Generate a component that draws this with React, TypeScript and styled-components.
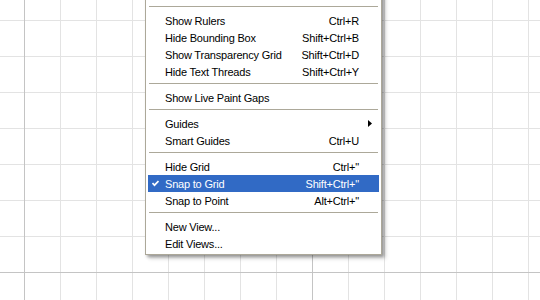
import React from "react"
import styled, { createGlobalStyle } from "styled-components"

const GlobalStyle = createGlobalStyle`
  html, body {
    margin: 0;
    padding: 0;
    background: #ffffff;
  }
  body {
    font-family: "Liberation Sans", Arial, sans-serif;
    font-size: 11px;
    letter-spacing: -0.2px;
  }
`;

const Canvas = styled.div`
  position: relative;
  width: 540px;
  height: 300px;
  overflow: hidden;
  background-color: #ffffff;
  background-image:
    linear-gradient(to right, #c4c4c4 1px, transparent 1px),
    linear-gradient(to bottom, #c4c4c4 1px, transparent 1px),
    linear-gradient(to right, #e3e3e3 1px, transparent 1px),
    linear-gradient(to bottom, #e3e3e3 1px, transparent 1px);
  background-size: 288px 288px, 288px 288px, 36px 36px, 36px 36px;
  background-position: 24px 0, 0 272px, 24px 0, 0 20px;
`;

const Menu = styled.div`
  position: absolute;
  left: 145px;
  top: -18px;
  width: 231px;
  padding: 20px 2px 2px;
  background: #ffffff;
  border: 1px solid #aca899;
  box-shadow: 2px 2px 3px rgba(0, 0, 0, 0.35), 4px 4px 4px rgba(0, 0, 0, 0.12);
  color: #000000;
`;

const Item = styled.div<{ $active?: boolean }>`
  display: flex;
  align-items: center;
  height: 17px;
  padding-right: 7px;
  background: ${(p) => (p.$active ? "#316ac5" : "transparent")};
  color: ${(p) => (p.$active ? "#ffffff" : "#000000")};
  white-space: nowrap;
`;

const CheckCell = styled.span`
  display: flex;
  align-items: center;
  width: 13px;
  padding-left: 4px;
`;

const Label = styled.span`
  flex: 1;
`;

const Shortcut = styled.span`
  margin-right: 13px;
`;

const Separator = styled.div`
  height: 9px;
  display: flex;
  flex-direction: column;
  padding: 0 1px;

  &::before {
    content: "";
    margin-top: 3px;
    height: 1px;
    background: #aca899;
  }
`;

type Entry =
  | { kind: "sep" }
  | { kind: "item"; label: string; shortcut?: string; checked?: boolean; submenu?: boolean };

const entries: Entry[] = [
  { kind: "sep" },
  { kind: "item", label: "Show Rulers", shortcut: "Ctrl+R" },
  { kind: "item", label: "Hide Bounding Box", shortcut: "Shift+Ctrl+B" },
  { kind: "item", label: "Show Transparency Grid", shortcut: "Shift+Ctrl+D" },
  { kind: "item", label: "Hide Text Threads", shortcut: "Shift+Ctrl+Y" },
  { kind: "sep" },
  { kind: "item", label: "Show Live Paint Gaps" },
  { kind: "sep" },
  { kind: "item", label: "Guides", submenu: true },
  { kind: "item", label: "Smart Guides", shortcut: "Ctrl+U" },
  { kind: "sep" },
  { kind: "item", label: "Hide Grid", shortcut: "Ctrl+\"" },
  { kind: "item", label: "Snap to Grid", shortcut: "Shift+Ctrl+\"", checked: true },
  { kind: "item", label: "Snap to Point", shortcut: "Alt+Ctrl+\"" },
  { kind: "sep" },
  { kind: "item", label: "New View..." },
  { kind: "item", label: "Edit Views..." },
];

function Check() {
  return (
    <svg width="7" height="7" viewBox="0 0 7 7">
      <path d="M0.5 3 L2.5 5.2 L6.5 1" fill="none" stroke="currentColor" strokeWidth="1.7" />
    </svg>
  );
}

function Arrow() {
  return (
    <svg width="4" height="7" viewBox="0 0 4 7">
      <polygon points="0,0 4,3.5 0,7" fill="currentColor" />
    </svg>
  );
}

export default function App() {
  return (
    <>
      <GlobalStyle />
      <Canvas>
        <Menu>
          {entries.map((e, i) =>
            e.kind === "sep" ? (
              <Separator key={i} />
            ) : (
              <Item key={i} $active={e.checked}>
                <CheckCell>{e.checked && <Check />}</CheckCell>
                <Label>{e.label}</Label>
                {e.shortcut && <Shortcut>{e.shortcut}</Shortcut>}
                {e.submenu && <Arrow />}
              </Item>
            )
          )}
        </Menu>
      </Canvas>
    </>
  )
}
